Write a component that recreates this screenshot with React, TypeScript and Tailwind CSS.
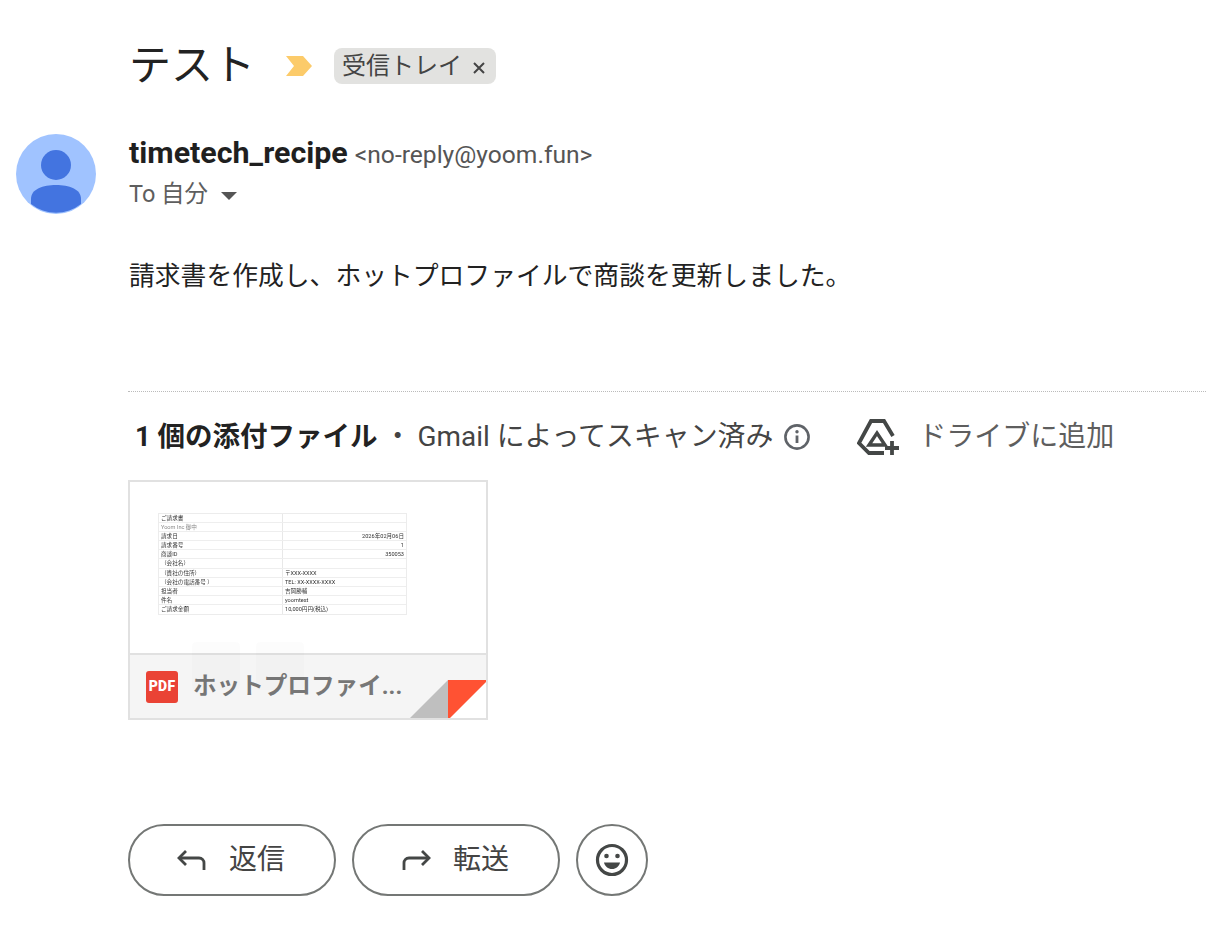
const font = '[font-family:Roboto,"Noto_Sans_CJK_JP",sans-serif]';

const rows = [
  ["ご請求書", ""],
  ["Yoom Inc 御中", ""],
  ["請求日", "2026年02月06日"],
  ["請求番号", "1"],
  ["商談ID", "350053"],
  ["（会社名）", ""],
  ["（貴社の住所）", "〒XXX-XXXX"],
  ["（会社の電話番号 ）", "TEL: XX-XXXX-XXXX"],
  ["担当者", "吉岡勝輔"],
  ["件名", "yoomtest"],
  ["ご請求金額", "10,000円円(税込)"],
];

function Avatar() {
  return (
    <svg width="80" height="80" viewBox="0 0 80 80" className="shrink-0">
      <circle cx="40" cy="40" r="40" fill="#a0c3ff" />
      <circle cx="40" cy="31" r="15" fill="#4374e0" />
      <path d="M15 70V65C15 55 27 51 40 51C53 51 65 55 65 65V70A40 40 0 0 1 15 70Z" fill="#4374e0" />
    </svg>
  );
}

function Reply({ flip }: { flip?: boolean }) {
  return (
    <svg width="30" height="24" viewBox="0 0 30 24" className={flip ? "-scale-x-100" : ""} fill="none" stroke="#444746" strokeWidth="2.8">
      <path d="M9 3L2 10L9 17" />
      <path d="M2 10H22C25 10 27 12 27 15V22" />
    </svg>
  );
}

function PreviewTable() {
  return (
    <div className="ml-[28px] mt-[31px] w-[249px] border border-[#ececec] text-[5.6px] leading-[9px] text-[#333] blur-[0.45px]">
      {rows.map(([a, b], i) => (
        <div key={a} className="grid h-[9.1px] grid-cols-[124px_1fr] border-b border-[#eeeeee] last:border-b-0">
          <div className={`truncate border-r border-[#e8e8e8] pl-[2px] ${i === 1 ? "text-[#888]" : ""}`}>{a}</div>
          <div className={`truncate px-[2px] ${i >= 2 && i <= 4 ? "text-right" : ""}`}>{b}</div>
        </div>
      ))}
    </div>
  );
}

function AttachmentCard() {
  return (
    <div className="relative flex h-[240px] w-[360px] flex-col overflow-hidden border-2 border-[#e1e1e1] bg-white">
      <div className="h-[171px] shrink-0 overflow-hidden">
        <PreviewTable />
      </div>
      <div className="flex flex-1 items-center gap-[15px] border-t-2 border-[#e1e1e1] bg-[#f5f5f5] pl-[16px]">
        <div className="flex h-[32px] w-[32px] items-center justify-center rounded-[3px] bg-[#ea4335] text-[14px] font-black tracking-[0.3px] text-white">PDF</div>
        <span className="text-[23.6px] font-bold text-[#777]">ホットプロファイ...</span>
      </div>
      {/* ghost hover buttons */}
      <div className="absolute left-[62px] top-[160px] flex gap-[16px]">
        <div className="h-[48px] w-[48px] rounded-[4px] bg-black/[0.012]" />
        <div className="h-[48px] w-[48px] rounded-[4px] bg-black/[0.012]" />
      </div>
      {/* folded corner */}
      <svg width="80" height="40" viewBox="0 0 80 40" className="absolute bottom-[-2px] right-[-2px]">
        <path d="M80 0V40H40Z" fill="#ffffff" />
        <path d="M40 0V40H0Z" fill="#bfbfbf" />
        <path d="M40 0H80L40 40Z" fill="#ff5233" />
      </svg>
    </div>
  );
}

export default function App() {
  return (
    <div className={`h-[940px] w-[1206px] overflow-hidden bg-white text-[#202124] ${font}`}>
      <div className="flex h-[66px] items-center pl-[129px] pt-[66px]">
        <h1 className="text-[42px] font-normal leading-none text-[#222]">テスト</h1>
        <svg width="26" height="20" viewBox="0 0 26 20" className="ml-[31px]">
          <path d="M0 0H17L26 10L17 20H0L8 10Z" fill="#fccb6a" />
        </svg>
        <div className="ml-[22px] flex h-[36px] items-center rounded-[8px] bg-[#e2e2e0] pl-[8px] pr-[11px] text-[24px] text-[#444]">
          <span>受信トレイ</span>
          <svg width="12" height="12" viewBox="0 0 12 12" className="ml-[11px] mt-[3px]" stroke="#444" strokeWidth="2">
            <path d="M1 1L11 11M11 1L1 11" />
          </svg>
        </div>
      </div>

      <div className="mt-[68px] flex pl-[16px]">
        <Avatar />
        <div className="ml-[33px] pt-[1px]">
          <div className="flex items-baseline">
            <span className="text-[30.4px] font-bold leading-[36px] text-[#1f1f1f]">timetech_recipe</span>
            <span className="ml-[7px] text-[24.6px] leading-[36px] text-[#555]">&lt;no-reply@yoom.fun&gt;</span>
          </div>
          <div className="mt-[6px] flex items-center text-[23.5px] leading-[30px] text-[#5e5e5e]">
            <span>To 自分</span>
            <svg width="16" height="8" viewBox="0 0 16 8" className="ml-[13px] mt-[3px]">
              <path d="M0 0H16L8 8Z" fill="#555" />
            </svg>
          </div>
        </div>
      </div>

      <p className="mt-[44px] pl-[129px] text-[25.8px] leading-[36px] text-[#222]">
        請求書を作成し、ホットプロファイルで商談を更新しました。
      </p>

      <div className="ml-[128px] mt-[97px] border-t border-dotted border-[#bbb]" />

      <div className="mt-[27px] flex h-[36px] items-center pl-[135px] text-[27.9px] text-[#444]">
        <span className="text-[27.5px] font-bold text-[#222]">1 個の添付ファイル</span>
        <span className="ml-[6px]">・</span>
        <span className="ml-[6px]">Gmail によってスキャン済み</span>
        <svg width="28" height="28" viewBox="0 0 28 28" className="ml-[10px]" fill="none">
          <circle cx="14" cy="14" r="11.6" stroke="#5f6368" strokeWidth="2.6" />
          <path d="M14 12.5V20" stroke="#5f6368" strokeWidth="2.8" />
          <circle cx="14" cy="8.8" r="1.7" fill="#5f6368" />
        </svg>
        <svg width="42" height="36" viewBox="0 0 42 36" className="ml-[46px]" fill="none" stroke="#444746" strokeWidth="3.8">
          <path d="M27 34H12L2 24L14 2H27L36 17" />
          <path d="M12 26H28L20 14Z" strokeWidth="3.4" />
          <path d="M35 22V36M28 29H42" />
        </svg>
        <span className="ml-[19px] text-[28px] text-[#5e5e5e]">ドライブに追加</span>
      </div>

      <div className="ml-[128px] mt-[25px]">
        <AttachmentCard />
      </div>

      <div className="ml-[128px] mt-[104px] flex gap-[16px]">
        <button className="flex h-[72px] w-[208px] items-center justify-center gap-[22px] rounded-full border-2 border-[#747775] pr-[2px] text-[28px] text-[#444]">
          <Reply />
          <span>返信</span>
        </button>
        <button className="flex h-[72px] w-[208px] items-center justify-center gap-[22px] rounded-full border-2 border-[#747775] pr-[2px] text-[28px] text-[#444]">
          <Reply flip />
          <span>転送</span>
        </button>
        <button className="flex h-[72px] w-[72px] items-center justify-center rounded-full border-2 border-[#747775]">
          <svg width="36" height="36" viewBox="0 0 36 36" fill="none">
            <circle cx="18" cy="18" r="14.5" stroke="#444746" strokeWidth="3.2" />
            <circle cx="12.5" cy="14" r="2.3" fill="#444746" />
            <circle cx="23.5" cy="14" r="2.3" fill="#444746" />
            <path d="M10 20.5H26C25 24.5 22 27 18 27C14 27 11 24.5 10 20.5Z" fill="#444746" />
          </svg>
        </button>
      </div>
    </div>
  );
}
